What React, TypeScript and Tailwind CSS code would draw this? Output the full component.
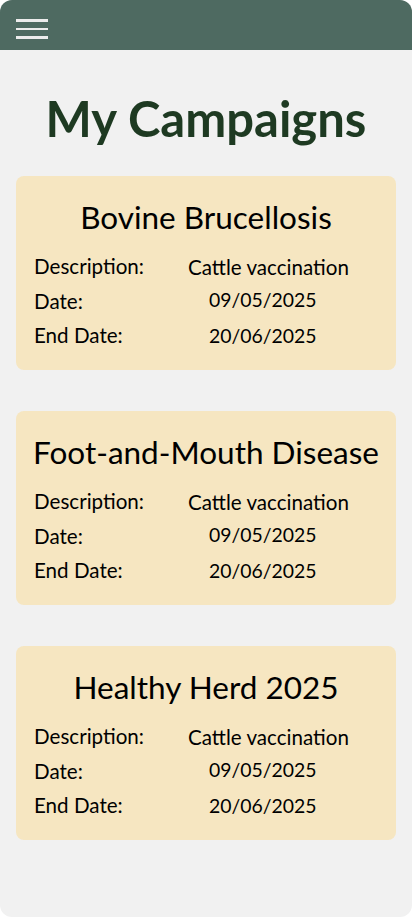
import React from "react";

const campaigns = [
  { title: "Bovine Brucellosis" },
  { title: "Foot-and-Mouth Disease" },
  { title: "Healthy Herd 2025" },
];

function Card({ title }: { title: string }) {
  return (
    <div className="rounded-[8px] bg-[#f6e6c1] pt-[21px] pb-[17.5px] text-black">
      <h2 className="text-center text-[31.5px] leading-[40px]">{title}</h2>
      <div className="mt-[12px] pl-[18px] text-[20.6px] leading-[34.5px]">
        <div className="flex">
          <span className="w-[154px] shrink-0">Description:</span>
          <span className="translate-y-[1px]">Cattle vaccination</span>
        </div>
        <div className="flex">
          <span className="w-[154px] shrink-0">Date:</span>
          <span className="pl-[21px] text-[19.4px] -translate-y-[1px]">09/05/2025</span>
        </div>
        <div className="flex">
          <span className="w-[154px] shrink-0">End Date:</span>
          <span className="pl-[21px] text-[19.4px] translate-y-[1px]">20/06/2025</span>
        </div>
      </div>
    </div>
  );
}

export default function App() {
  return (
    <div className="h-[917px] w-[412px] bg-white" style={{ fontFamily: "Lato, 'Noto Sans', sans-serif" }}>
      <div className="flex h-full flex-col overflow-hidden rounded-[12px] bg-[#f1f1f1]">
        <header className="flex h-[50px] shrink-0 items-start bg-[#4e6a61] px-[16px] pt-[19px]">
          <div className="flex w-[32px] flex-col gap-[6px]">
            <span className="h-[2.5px] w-full bg-[#ececec]" />
            <span className="h-[2.5px] w-full bg-[#ececec]" />
            <span className="h-[2.5px] w-full bg-[#ececec]" />
          </div>
        </header>
        <h1 className="mt-[40px] text-center text-[49px] font-bold leading-[56px] text-[#1e3a22]">
          My Campaigns
        </h1>
        <div className="mt-[30px] flex flex-col gap-[41px] px-[16px]">
          {campaigns.map((c) => (
            <Card key={c.title} title={c.title} />
          ))}
        </div>
      </div>
    </div>
  );
}
